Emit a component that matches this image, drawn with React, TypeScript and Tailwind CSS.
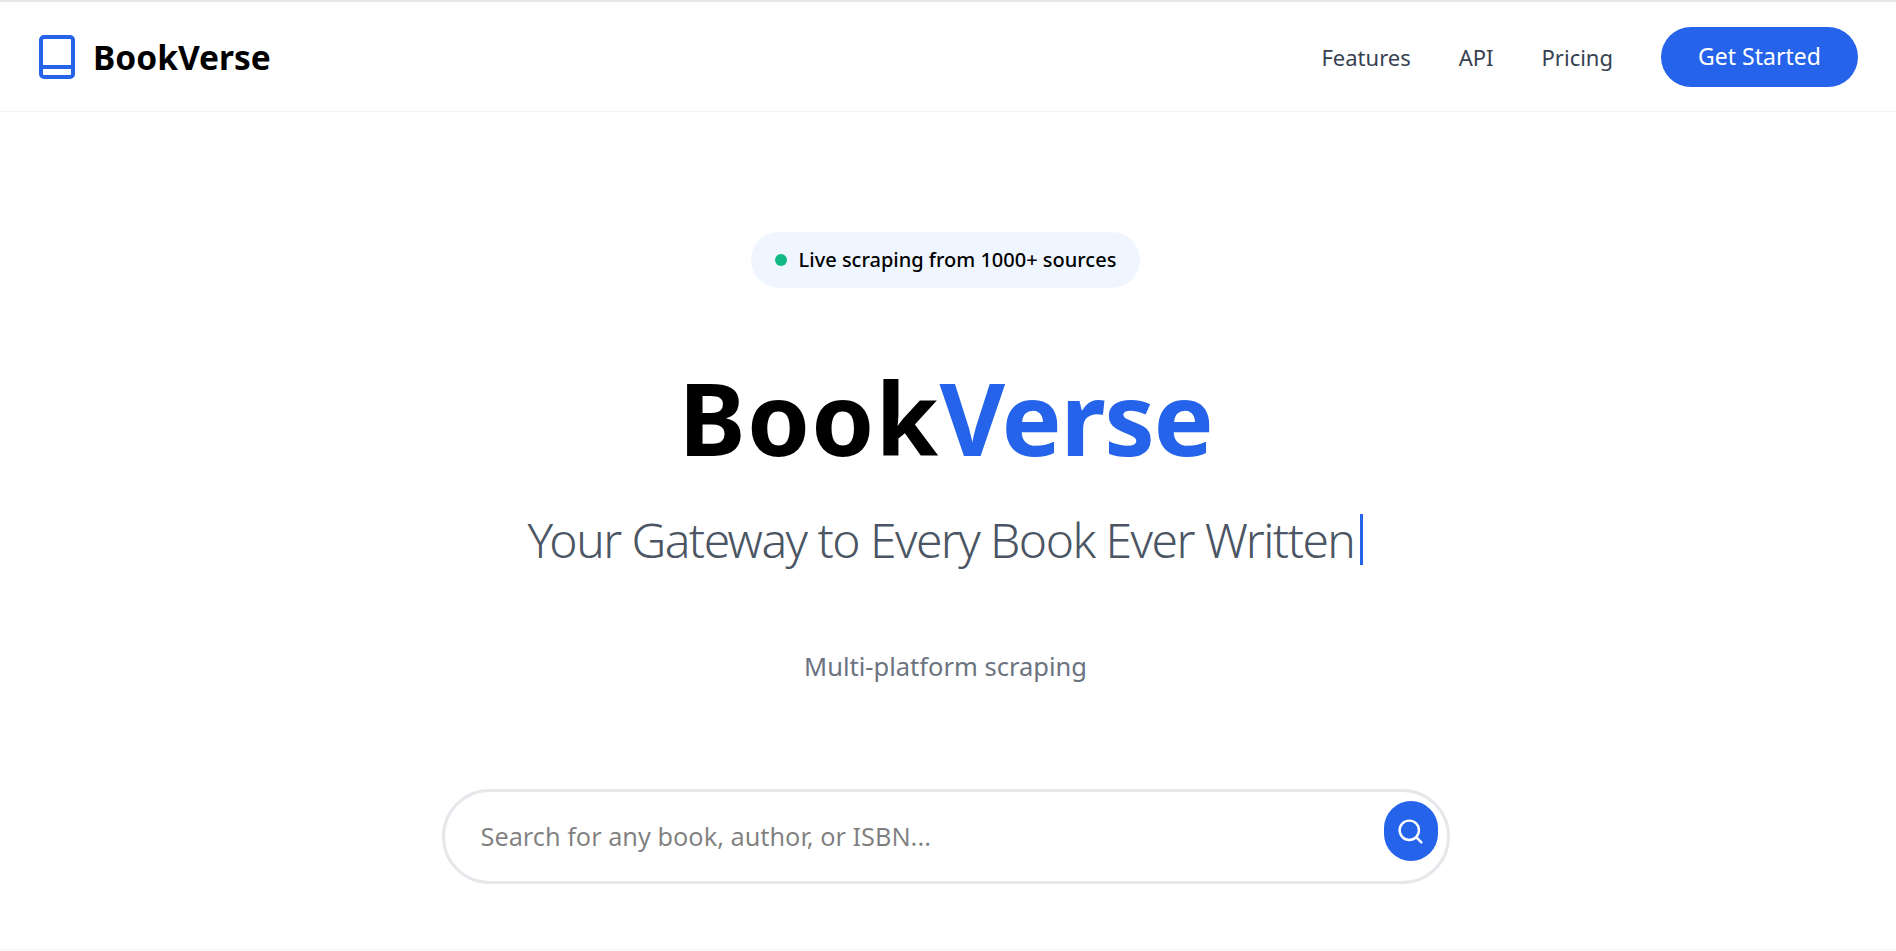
import React from 'react';
import { Search } from 'lucide-react';

const BookLogo = () => (
  <svg width="36" height="44" viewBox="0 0 36 44" fill="none" stroke="#2563eb" strokeWidth="4" strokeLinejoin="round">
    <rect x="2" y="2" width="32" height="40" rx="3" />
    <path d="M2 32h32" />
  </svg>
);

export default function App() {
  return (
    <div className="h-[951px] overflow-hidden bg-white border-t-2 border-[#e5e7eb] font-['Noto_Sans',sans-serif]">
      <nav className="h-[110px] flex items-center justify-between pl-[39px] pr-[38px] border-b border-[#f3f4f6]">
        <div className="flex items-center gap-[18px]">
          <BookLogo />
          <span className="text-[33.5px] font-bold text-black translate-y-px">BookVerse</span>
        </div>
        <div className="flex items-center gap-12">
          <a className="text-[22px] text-[#374151] translate-y-px">Features</a>
          <a className="text-[22px] text-[#374151] translate-y-px">API</a>
          <a className="text-[22px] text-[#374151] translate-y-px">Pricing</a>
          <button className="h-[60px] w-[197px] rounded-full bg-[#2563eb] text-white text-[23px]">Get Started</button>
        </div>
      </nav>

      <main className="flex flex-col items-center pt-[120px] pr-[5px] h-[838px] border-b border-[#f3f4f6]">
        <div className="h-[56px] px-6 rounded-full bg-[#eff6ff] flex items-center gap-3">
          <span className="w-3 h-3 rounded-full bg-[#10b981]" />
          <span className="text-[20px] font-medium text-black">Live scraping from 1000+ sources</span>
        </div>
        <h1 className="mt-[74px] text-[101px] leading-[110px] font-bold text-black">
          <span className="tracking-[1.2px]">Book</span>
          <span className="tracking-[-1.4px] text-[#2563eb]">Verse</span>
        </h1>
        <p className="mt-[42px] text-[48px] leading-[51px] tracking-[-1.55px] font-light text-[#4b5563] border-r-[3px] border-[#2563eb] pr-[6px]">
          Your Gateway to Every Book Ever Written
        </p>
        <p className="mt-[82px] text-[25.5px] text-[#6b7280]">Multi-platform scraping</p>
        <div className="mt-[104px] w-[1008px] h-[95px] rounded-full border-[3px] border-[#e5e7eb] flex items-center justify-between pl-9 pr-[9px]">
          <input
            className="flex-1 outline-none text-[25.3px] bg-transparent"
            placeholder="Search for any book, author, or ISBN..."
          />
          <button className="self-start mt-[9px] w-[54px] h-[60px] rounded-full bg-[#2563eb] flex items-center justify-center">
            <Search size={29} color="white" strokeWidth={2} />
          </button>
        </div>
      </main>
    </div>
  );
}
